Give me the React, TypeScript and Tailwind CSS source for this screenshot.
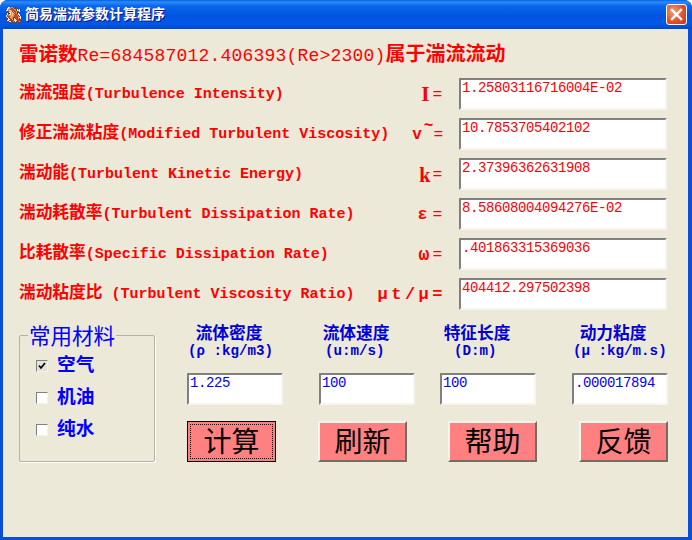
const mono = `"Liberation Mono", "Noto Sans CJK SC", monospace`

const iconRows = [
  "..ww.oo..bb.....",
  ".wwoorrobbd.....",
  ".woorrrroodw.w..",
  "wwoyyorrrodwww..",
  ".ddoyyrorroddw..",
  "..dwwoyrorodd...",
  ".wdkwoyyrrodw...",
  ".wdwwoyoorrdww..",
  "wroooyyorrrodw..",
  "wrrroyoorrrrodw.",
  ".wrryooddrrroww.",
  ".dwrroodwdrrodw.",
  "ddwwrrodwwdrrdd.",
  "dwwddrrdwwwdrrd.",
  ".ddwwdrodwddrod.",
  "...dddddddd.ddd.",
]

const iconColors: Record<string, string> = {
  w: "#f2e8e0",
  o: "#e08a3c",
  r: "#c8402c",
  y: "#f0c878",
  b: "#40506c",
  d: "#6a4630",
  k: "#201818",
}

function AppIcon() {
  return (
    <svg width="16" height="16" viewBox="0 0 16 16" shapeRendering="crispEdges" className="shrink-0">
      {iconRows.map((row, y) =>
        row.split("").map((c, x) => (c === "." ? null : <rect key={`${x}-${y}`} x={x} y={y} width="1" height="1" fill={iconColors[c]} />)),
      )}
    </svg>
  )
}

function CloseButton() {
  return (
    <div className="flex h-[21px] w-[21px] items-center justify-center rounded-[3px] border border-white bg-[radial-gradient(circle_at_35%_35%,#f0a080,#e0512c_55%,#c03a1a)]">
      <svg width="13" height="13" viewBox="0 0 13 13">
        <path d="M2 2 L11 11 M11 2 L2 11" stroke="#fff" strokeWidth="2.4" strokeLinecap="square" />
      </svg>
    </div>
  )
}

function Field({ value, className }: { value: string; className: string }) {
  return (
    <div className={`h-8 shrink-0 border-2 border-t-[#808080] border-l-[#808080] border-r-[#f7f5ee] border-b-[#f7f5ee] bg-white pl-px text-[14px] leading-[17px] tracking-[-0.4px] ${className}`}>
      {value}
    </div>
  )
}

const rows = [
  { cjk: "湍流强度", latin: "(Turbulence Intensity)", value: "1.25803116716004E-02", symbol: <><span className="-translate-y-px font-[Liberation_Serif] text-[21px]">I</span><span className="ml-[3px] font-normal">=</span></>, cls: "pr-[1px]" },
  { cjk: "修正湍流粘度", latin: "(Modified Turbulent Viscosity)", value: "10.7853705402102", symbol: <><span>v</span><span className="ml-[2px] -translate-y-[9px]">~</span><span className="font-normal">=</span></>, cls: "" },
  { cjk: "湍动能", latin: "(Turbulent Kinetic Energy)", value: "2.37396362631908", symbol: <><span className="font-[Liberation_Serif] text-[20px]">k</span><span className="ml-[2px] font-normal">=</span></>, cls: "pr-[1px]" },
  { cjk: "湍动耗散率", latin: "(Turbulent Dissipation Rate)", value: "8.58608004094276E-02", symbol: <><span>ε</span><span className="ml-[5px] font-normal">=</span></>, cls: "pr-[1px]" },
  { cjk: "比耗散率", latin: "(Specific Dissipation Rate)", value: ".401863315369036", symbol: <><span className="text-[18px]">ω</span><span className="ml-[3px] font-normal">=</span></>, cls: "pr-[1px]" },
  { cjk: "湍动粘度比", latin: " (Turbulent Viscosity Ratio)", value: "404412.297502398", symbol: <span className="-mr-[3px] text-[17px] tracking-[3.5px]">μt/μ=</span>, cls: "" },
]

const params = [
  { name: "流体密度", unit: "(ρ :kg/m3)", value: "1.225", head: "w-[127px]", col: "w-[132px]", unitCls: "ml-[7px]" },
  { name: "流体速度", unit: "(u:m/s)", value: "100", head: "w-[121px]", col: "w-[121px]", unitCls: "ml-[17px]" },
  { name: "特征长度", unit: "(D:m)", value: "100", head: "w-[136px]", col: "w-[132px]", unitCls: "ml-[25px]" },
  { name: "动力粘度", unit: "(μ :kg/m.s)", value: ".000017894", head: "w-24", col: "w-24", unitCls: "ml-[8px]" },
]

const materials = [
  { name: "空气", checked: true },
  { name: "机油", checked: false },
  { name: "纯水", checked: false },
]

const buttons = [
  { label: "计算", slot: "w-[131px]" },
  { label: "刷新", slot: "w-[130px]" },
  { label: "帮助", slot: "w-[131px]" },
  { label: "反馈", slot: "w-[89px]" },
]

export default function App() {
  return (
    <div className="flex h-[540px] w-[692px] flex-col overflow-hidden rounded-t-[8px] bg-[#0a4fd8]" style={{ fontFamily: mono }}>
      <div className="flex h-[29px] shrink-0 items-center bg-[linear-gradient(to_bottom,#0a5ce0_0px,#2a8cf8_2px,#0a66ea_6px,#0054e0_16px,#0058e8_24px,#0048c8_29px)] pl-[6px] pr-[5px]">
        <AppIcon />
        <div className="ml-[3px] flex-1 text-[14px] font-bold leading-none text-white [text-shadow:1px_1px_#0f1089]">简易湍流参数计算程序</div>
        <CloseButton />
      </div>

      <div className="mb-[3px] ml-[3px] mr-[4px] flex flex-1 flex-col bg-[#ece9d8] pl-[16px]">
        <div className="mt-[13px] h-[28px] font-bold leading-[28px] whitespace-pre text-[#ff0000]">
          <span className="text-[19.5px]">雷诺数</span>
          <span className="text-[18px] font-normal tracking-[0.2px]">Re=684587012.406393(Re&gt;2300)</span>
          <span className="text-[20px]">属于湍流流动</span>
        </div>

        <div className="mt-[8px] flex flex-col gap-2">
          {rows.map((r) => (
            <div key={r.cjk} className="flex h-8 items-start text-[#ff0000]">
              <div className="w-[392px] shrink-0 pt-[4px] text-[15px] font-bold leading-[24px] whitespace-pre">
                <span className="text-[16.7px]">{r.cjk}</span>
                {r.latin}
              </div>
              <div className={`flex w-[32px] shrink-0 items-center justify-end pt-[5px] text-[16px] font-bold leading-[24px] whitespace-nowrap ${r.cls}`}>{r.symbol}</div>
              <Field value={r.value} className="ml-4 w-[208px] text-[#ff0000]" />
            </div>
          ))}
        </div>

        <div className="mt-[13px] flex items-start">
          <div className="relative mt-[12px] h-[127px] w-[136px] shrink-0 rounded-[2px] border border-[#b5b2a4] pl-[16px] pt-[16px] shadow-[1px_1px_0_#fff]">
            <div className="absolute -top-[12px] left-[8px] bg-[#ece9d8] px-px text-[21.5px] leading-[28px] text-[#0000ff]">常用材料</div>
            <div className="flex flex-col gap-[4px]">
              {materials.map((m) => (
                <div key={m.name} className="flex h-[28px] items-center gap-[9px]">
                  <div className={`flex h-[12px] w-[12px] items-center justify-center border border-t-[#808080] border-l-[#808080] border-r-[#f4f2e8] border-b-[#f4f2e8] ${m.checked ? "bg-[#e4e2d8]" : "bg-white"}`}>
                    {m.checked && (
                      <svg width="8" height="8" viewBox="0 0 8 8">
                        <path d="M1 3.5 L3 6 L7 1" fill="none" stroke="#000" strokeWidth="1.7" />
                      </svg>
                    )}
                  </div>
                  <span className="text-[18.7px] font-bold leading-[24px] text-[#0000ff]">{m.name}</span>
                </div>
              ))}
            </div>
          </div>

          <div className="ml-[32px] flex flex-col">
            <div className="-ml-[6px] mt-[4px] flex">
              {params.map((p) => (
                <div key={p.name} className={`${p.head} shrink-0`}>
                  <div className="w-24 text-[14.2px] font-bold leading-[16px] whitespace-nowrap text-[#0000d8]">
                    <div className="text-center text-[16.7px]">{p.name}</div>
                    <div className={p.unitCls}>{p.unit}</div>
                  </div>
                </div>
              ))}
            </div>
            <div className="mt-[14px] flex">
              {params.map((p) => (
                <div key={p.name} className={`${p.col} shrink-0`}>
                  <Field value={p.value} className="w-24 text-[#0000ff]" />
                </div>
              ))}
            </div>
            <div className="mt-4 flex">
              {buttons.map((b, i) => (
                <div key={b.label} className={`${b.slot} shrink-0`}>
                  <div
                    className={
                      i === 0
                        ? "flex h-[41px] w-[89px] items-center justify-center border border-black bg-[#ff8080] p-[2px]"
                        : "flex h-[41px] w-[89px] items-center justify-center border-2 border-t-[#f7f5ee] border-l-[#f7f5ee] border-r-[#716f64] border-b-[#716f64] bg-[#ff8080]"
                    }
                  >
                    <div className={i === 0 ? "flex h-full w-full items-center justify-center border border-dotted border-black pt-[6px] text-[28px] leading-none text-black" : "pt-[6px] text-[28px] leading-none text-black"}>{b.label}</div>
                  </div>
                </div>
              ))}
            </div>
          </div>
        </div>
      </div>
    </div>
  )
}
